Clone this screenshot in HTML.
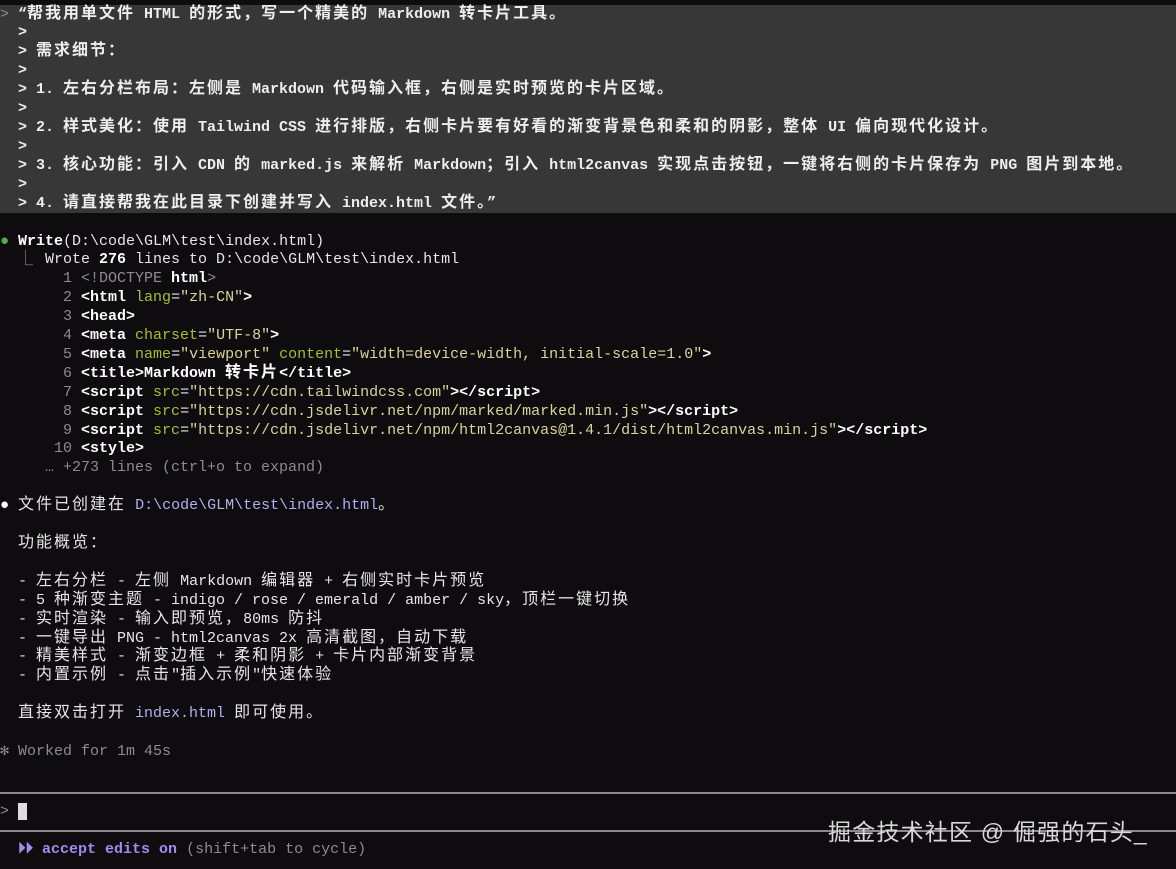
<!DOCTYPE html>
<html><head><meta charset="utf-8"><style>
body{margin:0;width:1176px;height:869px;background:#0e0c0e;overflow:hidden;position:relative;font-family:"Liberation Mono","Noto Sans CJK SC",monospace;font-size:15px;color:#e6e6e6}
.blk{position:absolute;left:0;white-space:pre;line-height:18.9px}
.top{position:absolute;left:0;top:5px;width:1176px;height:208px;background:#373737}
.w{color:#fff;font-weight:bold}
.t{color:#eee;font-weight:bold}
.g{color:#8c8c8c}
.a{color:#a9bd2f}
.s{color:#d9d49a}
.p{color:#aeb0f0}
.v{color:#a38af0;font-weight:bold}
i{font-style:normal;font-size:16px;letter-spacing:2px;line-height:0}
.hr{position:absolute;left:0;width:1176px;height:2px;background:#8a8a8a}
.k{display:inline-block;width:9px;overflow:visible}
</style></head><body>
<div class="top"></div>
<div class="blk t" style="top:5.5px;left:0"><span class="g" style="font-weight:normal">&gt;</span> “<i>帮我用单文件</i> HTML <i>的形式，写一个精美的</i> Markdown <i>转卡片工具。</i>
  &gt;
  &gt; <i>需求细节：</i>
  &gt;
  &gt; 1. <i>左右分栏布局：左侧是</i> Markdown <i>代码输入框，右侧是实时预览的卡片区域。</i>
  &gt;
  &gt; 2. <i>样式美化：使用</i> Tailwind CSS <i>进行排版，右侧卡片要有好看的渐变背景色和柔和的阴影，整体</i> UI <i>偏向现代化设计。</i>
  &gt;
  &gt; 3. <i>核心功能：引入</i> CDN <i>的</i> marked.js <i>来解析</i> Markdown<i>；引入</i> html2canvas <i>实现点击按钮，一键将右侧的卡片保存为</i> PNG <i>图片到本地。</i>
  &gt;
  &gt; 4. <i>请直接帮我在此目录下创建并写入</i> index.html <i>文件。</i>”</div>
<div class="blk" style="top:232.5px"><span style="color:#4cb050">●</span> <span class="w">Write</span>(D:\code\GLM\test\index.html)
<span class="g">  <span class="k">⎿</span></span>  Wrote <span class="w">276</span> lines to D:\code\GLM\test\index.html
<span class="g">       1 </span><span class="g">&lt;!DOCTYPE</span> <span class="w">html</span><span class="g">&gt;</span>
<span class="g">       2 </span><span class="w">&lt;html</span> <span class="a">lang</span>=<span class="s">"zh-CN"</span><span class="w">&gt;</span>
<span class="g">       3 </span><span class="w">&lt;head&gt;</span>
<span class="g">       4 </span><span class="w">&lt;meta</span> <span class="a">charset</span>=<span class="s">"UTF-8"</span><span class="w">&gt;</span>
<span class="g">       5 </span><span class="w">&lt;meta</span> <span class="a">name</span>=<span class="s">"viewport"</span> <span class="a">content</span>=<span class="s">"width=device-width, initial-scale=1.0"</span><span class="w">&gt;</span>
<span class="g">       6 </span><span class="w">&lt;title&gt;Markdown <i>转卡片</i>&lt;/title&gt;</span>
<span class="g">       7 </span><span class="w">&lt;script</span> <span class="a">src</span>=<span class="s">"https://cdn.tailwindcss.com"</span><span class="w">&gt;&lt;/script&gt;</span>
<span class="g">       8 </span><span class="w">&lt;script</span> <span class="a">src</span>=<span class="s">"https://cdn.jsdelivr.net/npm/marked/marked.min.js"</span><span class="w">&gt;&lt;/script&gt;</span>
<span class="g">       9 </span><span class="w">&lt;script</span> <span class="a">src</span>=<span class="s">"https://cdn.jsdelivr.net/npm/html2canvas@1.4.1/dist/html2canvas.min.js"</span><span class="w">&gt;&lt;/script&gt;</span>
<span class="g">      10 </span><span class="w">&lt;style&gt;</span>
<span class="g">     … +273 lines (ctrl+o to expand)</span>

<span style="color:#fff">●</span> <i>文件已创建在</i> <span class="p">D:\code\GLM\test\index.html</span><i>。</i>

  <i>功能概览：</i>

  - <i>左右分栏</i> - <i>左侧</i> Markdown <i>编辑器</i> + <i>右侧实时卡片预览</i>
  - 5 <i>种渐变主题</i> - indigo / rose / emerald / amber / sky<i>，顶栏一键切换</i>
  - <i>实时渲染</i> - <i>输入即预览，</i>80ms <i>防抖</i>
  - <i>一键导出</i> PNG - html2canvas 2x <i>高清截图，自动下载</i>
  - <i>精美样式</i> - <i>渐变边框</i> + <i>柔和阴影</i> + <i>卡片内部渐变背景</i>
  - <i>内置示例</i> - <i>点击</i>"<i>插入示例</i>"<i>快速体验</i>

  <i>直接双击打开</i> <span class="p">index.html</span> <i>即可使用。</i>

<span class="g">✻ Worked for 1m 45s</span></div>
<div class="hr" style="top:792px"></div>
<div class="blk" style="top:802.5px"><span class="g">&gt;</span> <span style="background:#ddd">&nbsp;</span></div>
<div class="hr" style="top:830px"></div>
<div class="blk" style="top:840.5px">  <span class="v">⏵⏵ accept edits on</span> <span class="g">(shift+tab to cycle)</span></div>
<div style="position:absolute;left:828px;top:813px;font-family:'Liberation Sans','Noto Sans CJK SC',sans-serif;font-size:23px;letter-spacing:1.2px;color:#d8d8d8;white-space:nowrap">掘金技术社区 @ 倔强的石头_</div>
</body></html>
